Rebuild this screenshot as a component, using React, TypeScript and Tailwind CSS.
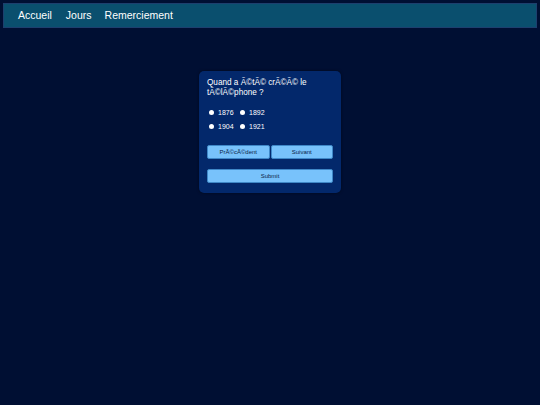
import React, { useState } from "react";

const options = ["1876", "1892", "1904", "1921"];

const App: React.FunctionComponent = () => {
    let [choice, setChoice] = useState("");
    return (
        <div className="min-h-[405px] w-full bg-[#000f33] p-[3px]" style={{ fontFamily: '"Liberation Sans", Arial, sans-serif' }}>
            <nav className="flex h-[25px] items-center border border-[#1d3f6e] bg-[#0a4f6e] pl-[14px] text-[10.5px] text-white">
                <a className="mr-[14px]">Accueil</a>
                <a className="mr-[13px]">Jours</a>
                <a>Remerciement</a>
            </nav>
            <div className="flex justify-center pt-[43px]">
                <div className="w-[142px] rounded-[5px] bg-[#03286b] px-[8px] pt-[7px] pb-[8px] shadow-[0_0_3px_rgba(0,0,0,0.5)]">
                    <p className="text-[8.2px] leading-[10px] text-white">Quand a Ã©tÃ© crÃ©Ã© le tÃ©lÃ©phone ?</p>
                    <div className="mt-[11px] grid w-[64px] grid-cols-2 gap-y-[7px] pl-[2px]">
                        {options.map((o) => (
                            <label key={o} className="flex items-center gap-[4px] text-[7px] leading-[7px] text-white" onClick={() => setChoice(o)}>
                                <span className={`inline-block h-[5px] w-[5px] rounded-full ${choice === o ? "bg-[#74bdf7]" : "bg-white"}`}></span>
                                {o}
                            </label>
                        ))}
                    </div>
                    <div className="mt-[15px] flex gap-[1px]">
                        <button className="h-[14px] flex-1 rounded-[2px] border border-[#3f88c8] bg-[#78c2fb] text-[6px] text-[#0b2246]">PrÃ©cÃ©dent</button>
                        <button className="h-[14px] flex-1 rounded-[2px] border border-[#3f88c8] bg-[#78c2fb] text-[6px] text-[#0b2246]">Suivant</button>
                    </div>
                    <button className="mt-[10px] h-[14px] w-full rounded-[2px] border border-[#3f88c8] bg-[#78c2fb] text-[6px] text-[#0b2246]">Submit</button>
                </div>
            </div>
        </div>
    );
};

export default App;
